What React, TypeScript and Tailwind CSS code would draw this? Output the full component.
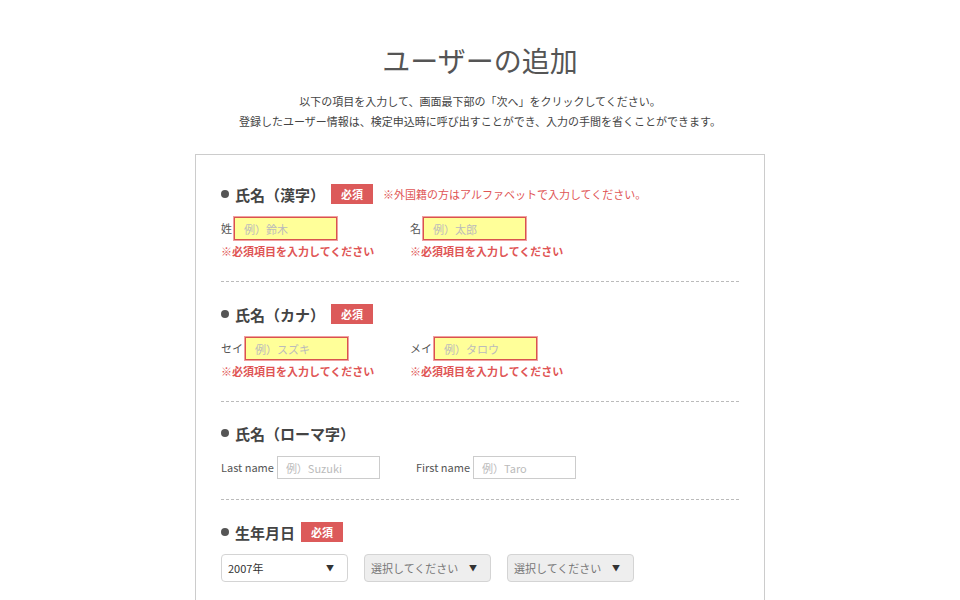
import React from 'react';

const FONT = { fontFamily: '"Noto Sans CJK JP", "Noto Sans", sans-serif' };

const Badge = () => (
    <span className="inline-flex items-center justify-center w-[42px] h-[20px] bg-[#dc5a5a] text-white text-[11px] font-bold leading-none">
        必須
    </span>
);

const Heading = ({ title, required, note }: { title: string; required?: boolean; note?: string }) => (
    <div className="flex items-center h-[20px]">
        <span className="w-[8px] h-[8px] rounded-full bg-[#555] mr-[6px]" />
        <span className="text-[15px] font-bold text-[#444] leading-none mr-[6px]">{title}</span>
        {required && <Badge />}
        {note && <span className="ml-[10px] text-[11px] text-[#e05555]">{note}</span>}
    </div>
);

const RequiredField = ({ label, placeholder, width }: { label: string; placeholder: string; width: string }) => (
    <div className={width}>
        <div className="flex items-center">
            <span className="text-[11px] text-[#555] mr-[2px]">{label}</span>
            <input
                placeholder={placeholder}
                className="w-[103px] h-[23px] bg-[#ffff99] border border-[#d9534f] shadow-[0_0_0_1px_#f0a0a0] pl-[9px] text-[11px] outline-none placeholder:text-[#bbb]"
            />
        </div>
        <p className="mt-[3px] text-[11px] font-bold text-[#e05555] leading-[16px]">※必須項目を入力してください</p>
    </div>
);

const PlainField = ({ label, placeholder, width }: { label: string; placeholder: string; width: string }) => (
    <div className={`${width} flex items-center`}>
        <span className="text-[11px] text-[#555] mr-[3px]">{label}</span>
        <input
            placeholder={placeholder}
            className="w-[103px] h-[23px] bg-white border border-[#ccc] pl-[8px] text-[11px] outline-none placeholder:text-[#bbb]"
        />
    </div>
);

const Select = ({ value, disabled }: { value: string; disabled?: boolean }) => (
    <div
        className={`w-[127px] h-[28px] rounded-[4px] border border-[#d4d4d4] flex items-center justify-between pl-[6px] pr-[13px] text-[11px] ${
            disabled ? 'bg-[#eee] text-[#777]' : 'bg-white text-[#333]'
        }`}
    >
        <span>{value}</span>
        <span className="text-[8px] text-[#333]">▼</span>
    </div>
);

export default function App() {
    return (
        <div className="min-h-screen bg-white" style={FONT}>
            <div className="pt-[41px] text-center">
                <h1 className="text-[28px] leading-[39px] text-[#555] font-normal">ユーザーの追加</h1>
                <div className="mt-[11px] text-[11px] leading-[20px] text-[#444]">
                    <p>以下の項目を入力して、画面最下部の「次へ」をクリックしてください。</p>
                    <p>登録したユーザー情報は、検定申込時に呼び出すことができ、入力の手間を省くことができます。</p>
                </div>
            </div>

            <div className="mx-auto mt-[23px] w-[570px] border border-[#ccc] px-[25px] pt-[7px] pb-[30px]">
                {/* 氏名（漢字） */}
                <section className="pt-[22px] pb-[22px] border-b border-dashed border-[#bbb]">
                    <Heading title="氏名（漢字）" required note="※外国籍の方はアルファベットで入力してください。" />
                    <div className="flex mt-[13px]">
                        <RequiredField label="姓" placeholder="例）鈴木" width="w-[189px]" />
                        <RequiredField label="名" placeholder="例）太郎" width="w-[189px]" />
                    </div>
                </section>

                {/* 氏名（カナ） */}
                <section className="pt-[22px] pb-[22px] border-b border-dashed border-[#bbb]">
                    <Heading title="氏名（カナ）" required />
                    <div className="flex mt-[13px]">
                        <RequiredField label="セイ" placeholder="例）スズキ" width="w-[189px]" />
                        <RequiredField label="メイ" placeholder="例）タロウ" width="w-[189px]" />
                    </div>
                </section>

                {/* 氏名（ローマ字） */}
                <section className="pt-[21px] pb-[20px] border-b border-dashed border-[#bbb]">
                    <Heading title="氏名（ローマ字）" />
                    <div className="flex mt-[13px]">
                        <PlainField label="Last name" placeholder="例）Suzuki" width="w-[195px]" />
                        <PlainField label="First name" placeholder="例）Taro" width="w-[195px]" />
                    </div>
                </section>

                {/* 生年月日 */}
                <section className="pt-[22px]">
                    <Heading title="生年月日" required />
                    <div className="flex gap-[16px] mt-[12px]">
                        <Select value="2007年" />
                        <Select value="選択してください" disabled />
                        <Select value="選択してください" disabled />
                    </div>
                </section>
            </div>
        </div>
    );
}
